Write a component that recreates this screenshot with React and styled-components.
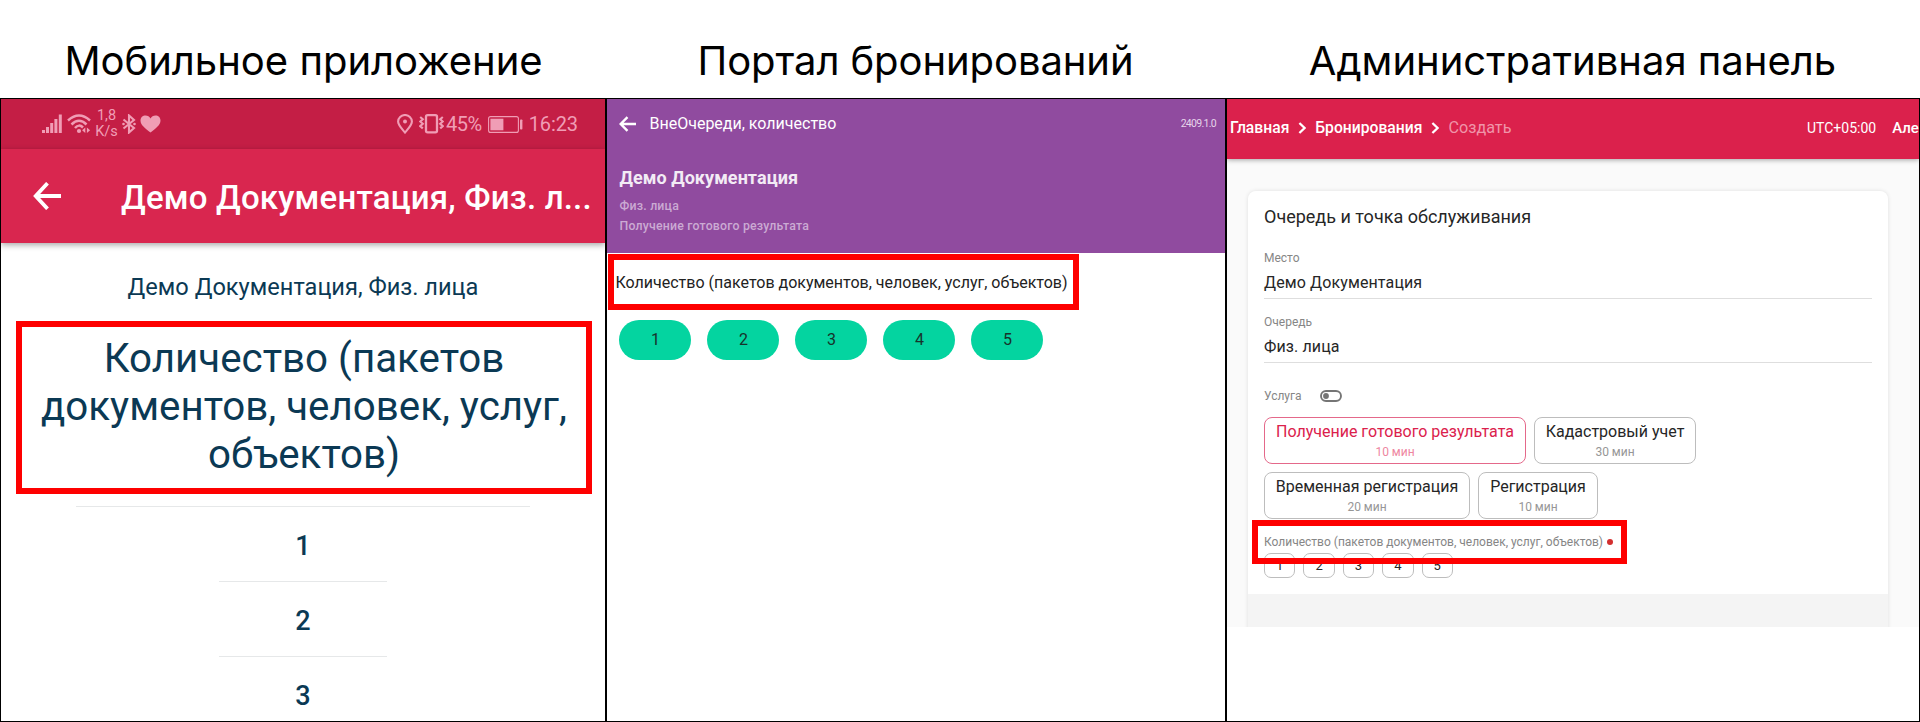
import React from "react";
import styled, { createGlobalStyle } from "styled-components";

const Global = createGlobalStyle`
  *, *::before, *::after { box-sizing: border-box; }
  body { margin: 0; background: #fff; font-family: Roboto, "Liberation Sans", sans-serif; }
`;

const Page = styled.div`
  width: 1920px;
  height: 722px;
  display: grid;
  grid-template: 98px 624px / 607px 620px 693px;
  overflow: hidden;
`;

const Caption = styled.h1`
  margin: 0;
  padding: 37px ${(p) => p.$inset || 0}px 0 0;
  text-align: center;
  white-space: nowrap;
  font: 400 40px/48px Inter, "Liberation Sans", sans-serif;
  letter-spacing: ${(p) => p.$track || 0}px;
  color: #000;
`;

const Panel = styled.section`
  display: flex;
  flex-direction: column;
  overflow: hidden;
  min-width: 0;
  border: solid #000;
  border-width: ${(p) => p.$edges};
  background: #fff;
`;

const Text = styled.span`
  display: block;
  white-space: nowrap;
  font-size: ${(p) => p.$size}px;
  line-height: ${(p) => p.$line || 20}px;
  font-weight: ${(p) => p.$weight || 400};
  letter-spacing: ${(p) => p.$track || 0}px;
  color: ${(p) => p.$color || "inherit"};
`;

const Highlight = styled.div`
  border: 6px solid #fe0000;
  flex: none;
`;

/* Mobile application */

const StatusBar = styled.div`
  height: 50px;
  flex: none;
  display: flex;
  justify-content: space-between;
  padding: 0 27px 0 40px;
  background: #c41e45;
  color: #f09db5;
`;

const StatusGroup = styled.div`
  display: flex;
  align-items: center;
  gap: ${(p) => p.$gap}px;
`;

const Speed = styled.div`
  width: 23px;
  text-align: center;
  font-size: 14.5px;
  line-height: 16px;
`;

const MobileHeader = styled.header`
  height: 94px;
  flex: none;
  display: flex;
  align-items: center;
  padding: 4px 0 0 32px;
  gap: 60px;
  background: #d9264f;
  color: #fff;
  position: relative;
  box-shadow: 0 2px 6px rgba(0, 0, 0, 0.35);
  svg { margin-top: -5px; flex: none; }
`;

const MobileBody = styled.div`
  display: flex;
  flex-direction: column;
  align-items: center;
  padding-top: 29px;
  color: #0b3954;
`;

const Question = styled(Highlight)`
  width: 576px;
  height: 173px;
  margin: 19px 0 12px 2px;
  padding-top: 8px;
  text-align: center;
`;

const Rule = styled.div`
  width: ${(p) => p.$width}px;
  height: 1px;
  flex: none;
  background: #e6e8e9;
`;

const Choice = styled.div`
  height: 74px;
  flex: none;
  padding-top: 3px;
  display: flex;
  align-items: center;
`;

/* Booking portal */

const PortalHeader = styled.header`
  height: 154px;
  flex: none;
  padding: 0 9px 0 12px;
  background: #904b9f;
  color: #fff;
`;

const PortalBar = styled.div`
  height: 49px;
  margin-bottom: 18px;
  display: flex;
  align-items: center;
  gap: 13.5px;
  & > :last-child { margin-left: auto; }
`;

const PortalInfo = styled.div`
  padding-left: 0.5px;
`;

const Subtitle = styled.div`
  margin-top: 6px;
`;

const PortalQuestion = styled(Highlight)`
  width: 471px;
  height: 56px;
  margin: 1px 0 10px 1px;
  padding: 1px 0 0 1.5px;
  display: flex;
  align-items: center;
  color: #222;
`;

const PillRow = styled.div`
  display: flex;
  gap: 16px;
  padding-left: 12.4px;
`;

const Pill = styled.button`
  width: 72px;
  height: 40px;
  padding: 0;
  border: 0;
  border-radius: 20px;
  background: #04d4a0;
  color: #17332b;
  font: 400 16px/40px Roboto, sans-serif;
`;

/* Administration panel */

const AdminHeader = styled.header`
  height: 60px;
  flex: none;
  position: relative;
  display: flex;
  justify-content: space-between;
  align-items: center;
  padding: 0 0 3px 3px;
  background: #db214c;
  color: #fff;
  box-shadow: 0 1px 5px rgba(0, 0, 0, 0.35);
`;

const Crumbs = styled.nav`
  display: flex;
  align-items: center;
  gap: 9px;
`;

const Account = styled.div`
  display: flex;
  gap: 16px;
  width: 112px;
  overflow: hidden;
`;

const AdminBody = styled.div`
  height: 468px;
  flex: none;
  padding: 32px 31px 0 21px;
  background: #fafafa;
  overflow: hidden;
`;

const Card = styled.div`
  height: 460px;
  border-radius: 8px;
  overflow: hidden;
  background: #f4f4f4;
  box-shadow: 0 0 4px rgba(0, 0, 0, 0.11);
`;

const CardContent = styled.div`
  height: 403px;
  padding: 14px 16px 0;
  background: #fff;
  color: #262626;
`;

const Field = styled.div`
  margin-top: ${(p) => p.$top}px;
  border-bottom: 1px solid #dedede;
  padding-bottom: 3px;
  display: flex;
  flex-direction: column;
  gap: 5px;
`;

const ServiceRow = styled.div`
  margin: 25px 0 13px;
  height: 16px;
  display: flex;
  align-items: center;
  gap: 18px;
`;

const Services = styled.div`
  display: flex;
  flex-wrap: wrap;
  gap: 8px;
  width: 480px;
`;

const Service = styled.div`
  width: ${(p) => p.$width}px;
  height: 47px;
  border: 1px solid ${(p) => (p.$active ? "#e4688a" : "#bdbdbd")};
  border-radius: 8px;
  padding-top: 4px;
  text-align: center;
  color: ${(p) => (p.$active ? "#db214c" : "#262626")};
  ${Text} + ${Text} {
    margin-top: 2px;
    color: ${(p) => (p.$active ? "#ee86a0" : "#969696")};
  }
`;

const Quantity = styled.div`
  position: relative;
  margin: 15px 0 3px;
  display: flex;
  align-items: center;
  gap: 4px;
`;

const Required = styled.i`
  width: 6px;
  height: 6px;
  border-radius: 50%;
  background: #d32f2f;
`;

const QuantityMark = styled(Highlight)`
  position: absolute;
  left: -12px;
  top: -14px;
  width: 375px;
  height: 44px;
`;

const Numbers = styled.div`
  display: flex;
  gap: 8px;
`;

const NumberBox = styled.div`
  width: 31.4px;
  height: 25px;
  border: 1px solid #bdbdbd;
  border-radius: 7px;
  text-align: center;
  font-size: 13px;
  line-height: 24px;
`;

const Signal = () => (
  <svg width="22" height="20" viewBox="0 0 22 20" fill="currentColor">
    <rect x="1" y="16" width="3" height="3" /><rect x="5" y="13" width="3" height="6" />
    <rect x="9.2" y="9" width="3" height="10" /><rect x="13.4" y="5" width="3" height="14" />
    <rect x="17.8" y="0.5" width="3" height="18.5" />
  </svg>
);

const Wifi = () => (
  <svg width="24" height="20" viewBox="0 0 24 20" fill="none" stroke="currentColor" strokeWidth="2.5">
    <path d="M1 6.5Q12 -3.5 23 6.5M4.5 10.5Q12 3 19.5 10.5M8 14Q12 9.5 16 13.5" />
    <circle cx="12" cy="17" r="2.1" fill="currentColor" stroke="none" />
    <path d="M18.3 13.5v5.4l-3.2-2.7zM19.9 13.5v5.4l3.2-2.7z" fill="currentColor" stroke="none" />
  </svg>
);

const Bluetooth = () => (
  <svg width="14" height="20" viewBox="0 0 14 20" fill="none" stroke="currentColor" strokeWidth="2.1">
    <path d="M1.5 5.5L12 14L7 18.5V1.5L12 6L1.5 14.5" />
    <circle cx="1.5" cy="10" r="1.3" fill="currentColor" stroke="none" />
    <circle cx="12.5" cy="10" r="1.3" fill="currentColor" stroke="none" />
  </svg>
);

const Heart = () => (
  <svg width="21" height="18" viewBox="0 0 21 18" fill="currentColor">
    <path d="M10.5 17.5C5 13.3 .5 10 .5 5.5C.5 2.4 2.8.5 5.5.5C7.7.5 9.5 1.6 10.5 3.4C11.5 1.6 13.3.5 15.5.5C18.2.5 20.5 2.4 20.5 5.5C20.5 10 16 13.3 10.5 17.5Z" />
  </svg>
);

const Pin = () => (
  <svg width="16" height="20" viewBox="0 0 16 20" fill="none" stroke="currentColor" strokeWidth="2.1">
    <path d="M8 18.5C4.5 14.5 1.1 11.3 1.1 7.6A6.9 6.6 0 0 1 14.9 7.6C14.9 11.3 11.5 14.5 8 18.5Z" />
    <circle cx="8" cy="7.6" r="2" fill="currentColor" stroke="none" />
  </svg>
);

const VibrateIcon = styled.svg`
  margin-right: -4px;
`;

const Vibrate = () => (
  <VibrateIcon width="25" height="20" viewBox="0 0 25 20" fill="none" stroke="currentColor">
    <rect x="7" y="1.2" width="11" height="17.2" rx="1.6" strokeWidth="2.3" />
    <path d="M1.2 3l2.6 2.2-2.6 2.3 2.6 2.3-2.6 2.3 2.6 2.3M23.8 3l-2.6 2.2 2.6 2.3-2.6 2.3 2.6 2.3-2.6 2.3" strokeWidth="2.1" />
  </VibrateIcon>
);

const Battery = () => (
  <svg width="35" height="17" viewBox="0 0 35 17">
    <rect x=".6" y=".6" width="29.8" height="15.8" rx="2" fill="none" stroke="currentColor" strokeWidth="1.1" />
    <rect x="2.4" y="2.7" width="13" height="11.6" fill="currentColor" />
    <rect x="32" y="3.5" width="2.4" height="10" rx=".8" fill="currentColor" />
  </svg>
);

const BackArrow = ({ width, height, stroke }) => (
  <svg width={width} height={height} viewBox={`0 0 ${width} ${height}`} fill="none" stroke="currentColor" strokeWidth={stroke}>
    <path d={`M${height / 2 + 0.5} 1.2L${stroke / 1.4} ${height / 2}L${height / 2 + 0.5} ${height - 1.2}M${stroke / 1.4} ${height / 2}H${width}`} />
  </svg>
);

const Chevron = () => (
  <svg width="8" height="12" viewBox="0 0 8 12" fill="none" stroke="currentColor" strokeWidth="2.3">
    <path d="M1.4 1L6.6 6L1.4 11" />
  </svg>
);

const Toggle = () => (
  <svg width="22" height="12" viewBox="0 0 22 12" fill="none" stroke="#757575" strokeWidth="1.9">
    <rect x="1" y="1" width="20" height="10" rx="5" />
    <circle cx="6" cy="6" r="2.9" fill="#757575" stroke="none" />
  </svg>
);

const services = [
  { name: "Получение готового результата", time: "10 мин", width: 262, active: true },
  { name: "Кадастровый учет", time: "30 мин", width: 162 },
  { name: "Временная регистрация", time: "20 мин", width: 206 },
  { name: "Регистрация", time: "10 мин", width: 120 },
];

const counts = [1, 2, 3, 4, 5];

function MobileApp() {
  return (
    <Panel $edges="1px 2px 1px 1px">
      <StatusBar>
        <StatusGroup $gap={4}>
          <Signal />
          <Wifi />
          <Speed>1,8<br />K/s</Speed>
          <Bluetooth />
          <Heart />
        </StatusGroup>
        <StatusGroup $gap={6}>
          <Pin />
          <Vibrate />
          <Text $size={20} $track={-0.5}>45%</Text>
          <Battery />
          <Text $size={20} $track={-0.1}>16:23</Text>
        </StatusGroup>
      </StatusBar>
      <MobileHeader>
        <BackArrow width={28} height={28} stroke={3.8} />
        <Text $size={33} $line={40} $weight={500} $track={0.19}>Демо Документация, Физ. л...</Text>
      </MobileHeader>
      <MobileBody>
        <Text $size={23.6} $line={30}>Демо Документация, Физ. лица</Text>
        <Question>
          <Text $size={40.3} $line={48}>Количество (пакетов</Text>
          <Text $size={40.3} $line={48}>документов, человек, услуг,</Text>
          <Text $size={40.3} $line={48}>объектов)</Text>
        </Question>
        <Rule $width={454} />
        {counts.slice(0, 3).map((n) => (
          <React.Fragment key={n}>
            {n > 1 && <Rule $width={168} />}
            <Choice><Text $size={27} $line={32} $weight={500}>{n}</Text></Choice>
          </React.Fragment>
        ))}
      </MobileBody>
    </Panel>
  );
}

function Portal() {
  return (
    <Panel $edges="1px 2px 1px 0">
      <PortalHeader>
        <PortalBar>
          <BackArrow width={17} height={16} stroke={2.4} />
          <Text $size={16}>ВнеОчереди, количество</Text>
          <Text $size={10.5} $track={-0.7} $color="#e6d5ea">2409.1.0</Text>
        </PortalBar>
        <PortalInfo>
          <Text $size={18} $line={24} $weight={700} $track={0.05} $color="#f3ebf5">Демо Документация</Text>
          <Subtitle>
            <Text $size={12.3} $weight={500} $track={0.21} $color="#cbaad3">Физ. лица</Text>
            <Text $size={12.3} $weight={500} $track={0.21} $color="#cbaad3">Получение готового результата</Text>
          </Subtitle>
        </PortalInfo>
      </PortalHeader>
      <PortalQuestion>
        <Text $size={16}>Количество (пакетов документов, человек, услуг, объектов)</Text>
      </PortalQuestion>
      <PillRow>{counts.map((n) => <Pill key={n}>{n}</Pill>)}</PillRow>
    </Panel>
  );
}

function Admin() {
  return (
    <Panel $edges="1px 1px 1px 0">
      <AdminHeader>
        <Crumbs>
          <Text $size={15.7} $weight={500}>Главная</Text>
          <Chevron />
          <Text $size={15.7} $weight={500}>Бронирования</Text>
          <Chevron />
          <Text $size={16.2} $color="#f094a9">Создать</Text>
        </Crumbs>
        <Account>
          <Text $size={14}>UTC+05:00</Text>
          <Text $size={15} $weight={500}>Але</Text>
        </Account>
      </AdminHeader>
      <AdminBody>
        <Card>
          <CardContent>
            <Text $size={18} $line={24}>Очередь и точка обслуживания</Text>
            <Field $top={21}>
              <Text $size={12} $line={16} $color="#868686">Место</Text>
              <Text $size={16} $line={24} $track={0.12}>Демо Документация</Text>
            </Field>
            <Field $top={15}>
              <Text $size={12} $line={16} $color="#868686">Очередь</Text>
              <Text $size={16} $line={24} $track={0.12}>Физ. лица</Text>
            </Field>
            <ServiceRow>
              <Text $size={12} $line={16} $color="#868686">Услуга</Text>
              <Toggle />
            </ServiceRow>
            <Services>
              {services.map((s) => (
                <Service key={s.name} $width={s.width} $active={s.active}>
                  <Text $size={16}>{s.name}</Text>
                  <Text $size={12} $line={16}>{s.time}</Text>
                </Service>
              ))}
            </Services>
            <Quantity>
              <Text $size={12} $line={16} $color="#868686">Количество (пакетов документов, человек, услуг, объектов)</Text>
              <Required />
              <QuantityMark />
            </Quantity>
            <Numbers>{counts.map((n) => <NumberBox key={n}>{n}</NumberBox>)}</Numbers>
          </CardContent>
        </Card>
      </AdminBody>
    </Panel>
  );
}

export default function App() {
  return (
    <>
      <Global />
      <Page>
        <Caption>Мобильное приложение</Caption>
        <Caption $inset={3} $track={-0.08}>Портал бронирований</Caption>
        <Caption $inset={2}>Административная панель</Caption>
        <MobileApp />
        <Portal />
        <Admin />
      </Page>
    </>
  );
}
